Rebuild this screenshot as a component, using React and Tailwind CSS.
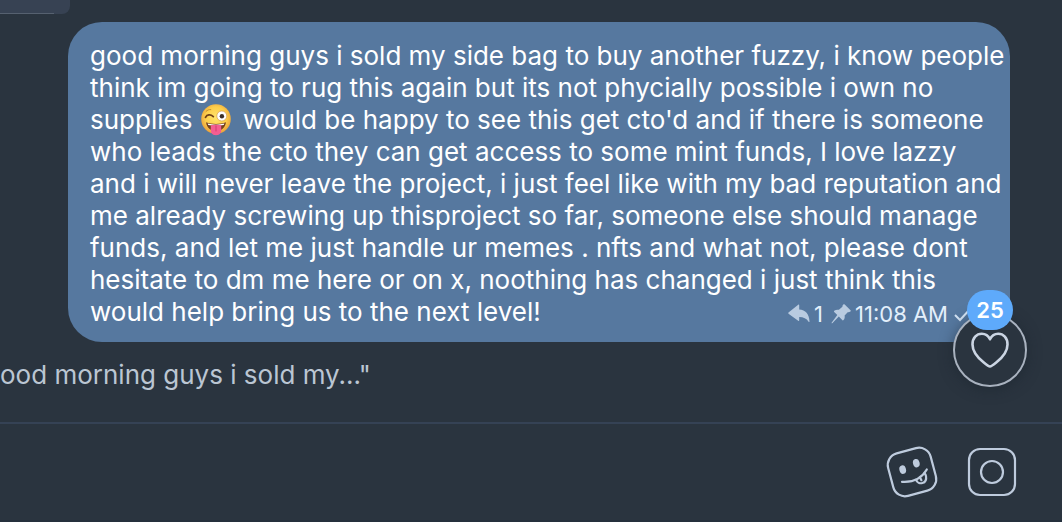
const messageLines = [
  "who leads the cto they can get access to some mint funds, I love lazzy",
  "and i will never leave the project, i just feel like with my bad reputation and",
  "me already screwing up thisproject so far, someone else should manage",
  "funds, and let me just handle ur memes . nfts and what not, please dont",
  "hesitate to dm me here or on x, noothing has changed i just think this",
];

function WinkEmoji() {
  return (
    <svg viewBox="0 0 32 32" className="mr-1 inline-block h-8 w-8 align-top" role="img" aria-label="Winking face with tongue">
      <defs>
        <radialGradient id="face" cx="50%" cy="45%" r="55%">
          <stop offset="0" stopColor="#ffe46b" />
          <stop offset="0.65" stopColor="#fdce4b" />
          <stop offset="1" stopColor="#e9a03c" />
        </radialGradient>
      </defs>
      <circle cx="16" cy="15" r="14.8" fill="url(#face)" />
      <path d="M5.500 13.300c1.500-2.800 5-3.200 7.800-.7" fill="none" stroke="#714117" strokeWidth="1.800" strokeLinecap="round" />
      <path d="M6 7.500c1.300-1.500 3-2.200 4.800-1.900" fill="none" stroke="#c98f2c" strokeWidth="1" strokeLinecap="round" />
      <circle cx="21.8" cy="12" r="5" fill="#fff" stroke="#d79b4b" strokeWidth="0.7" />
      <circle cx="21.9" cy="12.200" r="2.200" fill="#3d3029" />
      <path d="M6 18.200c6 2.300 14 2.300 20 0-.8 5.500-4.800 8.800-10 8.800S6.800 23.700 6 18.200Z" fill="#75401d" />
      <path d="M7.600 19.500c5.300 1.500 11.500 1.500 16.800 0l-.7 1.600c-4.800 1-10.600 1-15.400 0Z" fill="#fff" />
      <path d="M10.800 21.300c3.200-.9 7.200-.9 10.400 0v5.200c0 3-2.300 4.700-5.200 4.700s-5.200-1.700-5.200-4.700Z" fill="#f45d91" />
      <path d="M16 22v5" stroke="#cf3b70" strokeWidth="1" strokeLinecap="round" />
    </svg>
  );
}

function ReplyIcon() {
  return (
    <svg viewBox="0 0 22 20" className="h-5 w-[22px]" fill="#b9cbe0" aria-hidden="true">
      <path d="M.5 8.600 10.200.8c.6-.4 1-.2 1 .5v4.100c6.300.2 10 4.500 10.300 12 0 .7-.5.900-.9.300-2.100-3.200-5-4.700-9.400-4.700v3.300c0 .7-.5.900-1 .500L.5 9.800c-.4-.4-.4-.8 0-1.200Z" />
    </svg>
  );
}

function PinIcon() {
  return (
    <svg viewBox="0 0 20 20" className="h-5 w-5" fill="#b9cbe0" aria-hidden="true">
      <path d="M12.300.6c.4-.5.900-.6 1.400-.1l5.800 5.700c.5.500.4 1-.1 1.300-.9.600-1.700.8-2.700.7l-3.100 3.200c.4 1.800 0 3.400-1.100 4.700-.3.400-.7.400-1 .1l-3.700-3.700-6.500 6.700c-.5.400-1 0-.7-.5l5.700-7.700-3.100-3.100c-.4-.4-.4-.8 0-1.100 1.400-1 3-1.400 4.700-1l3.500-3c-.1-.8.200-1.500.9-2.200Z" />
    </svg>
  );
}

function StickerIcon() {
  return (
    <svg viewBox="0 0 54 54" className="h-[54px] w-[54px]" fill="none" stroke="#becbdd" strokeWidth="2.200" strokeLinecap="round" strokeLinejoin="round" aria-hidden="true">
      <rect x="5" y="5" width="44" height="44" rx="12" transform="rotate(-15 27 27)" />
      <g fill="#becbdd" stroke="none">
        <ellipse cx="17.700" cy="24.600" rx="3.300" ry="4.300" transform="rotate(-15 17.700 24.600)" />
        <ellipse cx="31.300" cy="18.200" rx="3.300" ry="4.300" transform="rotate(-15 31.300 18.200)" />
      </g>
      <path d="M17 36.800c11.500.8 19.500-3.300 24.800-12.300" />
      <path d="M31 34.800c2.200 5.600 11.400 4.300 10-3.700-.2-1-.7-1.900-1.500-2.800" />
      <path d="M35 32.500l1.400 2.700" />
    </svg>
  );
}

export default function App() {
  return (
    <main className="flex min-h-screen flex-col overflow-hidden bg-[#2a343f] font-['Inter',sans-serif] text-[26px] leading-8 text-white">
      <section className="relative">
        {/* Tail end of the previous message */}
        <div className="h-[14px] w-[70px] rounded-br-lg bg-[#374253] pr-4">
          <div className="h-[14px] border-b border-[#566170]" />
        </div>

        <article className="mt-2 mr-[52px] ml-[68px] rounded-[34px] bg-[#56789f] px-[22px] pt-[18px] pb-[14px] whitespace-nowrap">
          <p>
            good morning guys i sold my side bag to buy another fuzzy, i know people
            <br />
            think im going to rug this again but its not phycially possible i own no
            <br />
            supplies <WinkEmoji /> would be happy to see this get cto'd and if there is someone
            <br />
            {messageLines.map((line) => (
              <span key={line} className="block">{line}</span>
            ))}
          </p>
          <div className="flex items-center justify-between">
            <p>would help bring us to the next level!</p>
            <div className="flex items-center pt-1 pr-3 text-[22px] leading-7 text-[#e3effb]">
              <ReplyIcon />
              <span className="ml-1">1</span>
              <span className="ml-2"><PinIcon /></span>
              <time className="ml-1">11:08 AM</time>
              <svg viewBox="0 0 24 18" className="ml-1 h-[18px] w-6" fill="none" stroke="#d3e3f4" strokeWidth="2" aria-label="Read">
                <path d="m3 10 5 5L20 2" />
              </svg>
            </div>
          </div>
        </article>

        <button
          type="button"
          aria-label="25 unread reactions"
          className="absolute right-[35px] -bottom-[45px] flex h-[74px] w-[74px] items-center justify-center rounded-full border-2 border-[#a9b2bf] bg-[#2a343f] shadow-[0_2px_14px_#18212b80]"
        >
          <svg viewBox="0 0 40 38" className="h-[38px] w-10" fill="none" stroke="#cbd5e3" strokeWidth="2.600" strokeLinejoin="round" aria-hidden="true">
            <path d="M20 35.500c-.8 0-3.500-1.700-6.500-4.200C7.800 26.700 2.500 20.800 2.500 13.500 2.500 7 6.500 2.800 11.800 2.800c3.600 0 6.500 1.900 8.200 5.500 1.700-3.600 4.600-5.500 8.200-5.500 5.300 0 9.300 4.200 9.300 10.700 0 7.300-5.300 13.200-11 17.800-3 2.500-5.700 4.200-6.500 4.200Z" />
          </svg>
          <span className="absolute -top-[25px] flex h-10 w-[46px] items-center justify-center rounded-full bg-[#5eaafb] text-[22px] font-semibold">
            25
          </span>
        </button>
      </section>

      <p className="mt-[17px] whitespace-nowrap text-[#bbc6d3]">ood morning guys i sold my..."</p>

      <footer className="mt-[31px] flex flex-1 items-center justify-end gap-7 border-t-2 border-b-2 border-t-[#354255] border-b-[#25303c] pr-[45px]">
        <button type="button" aria-label="Stickers">
          <StickerIcon />
        </button>
        <button type="button" aria-label="Record video message">
          <svg viewBox="0 0 50 50" className="h-[50px] w-[50px]" fill="none" stroke="#becbdd" strokeWidth="2.200" aria-hidden="true">
            <rect x="2" y="2" width="46" height="46" rx="11" />
            <circle cx="25" cy="25" r="11" />
          </svg>
        </button>
      </footer>
    </main>
  );
}
